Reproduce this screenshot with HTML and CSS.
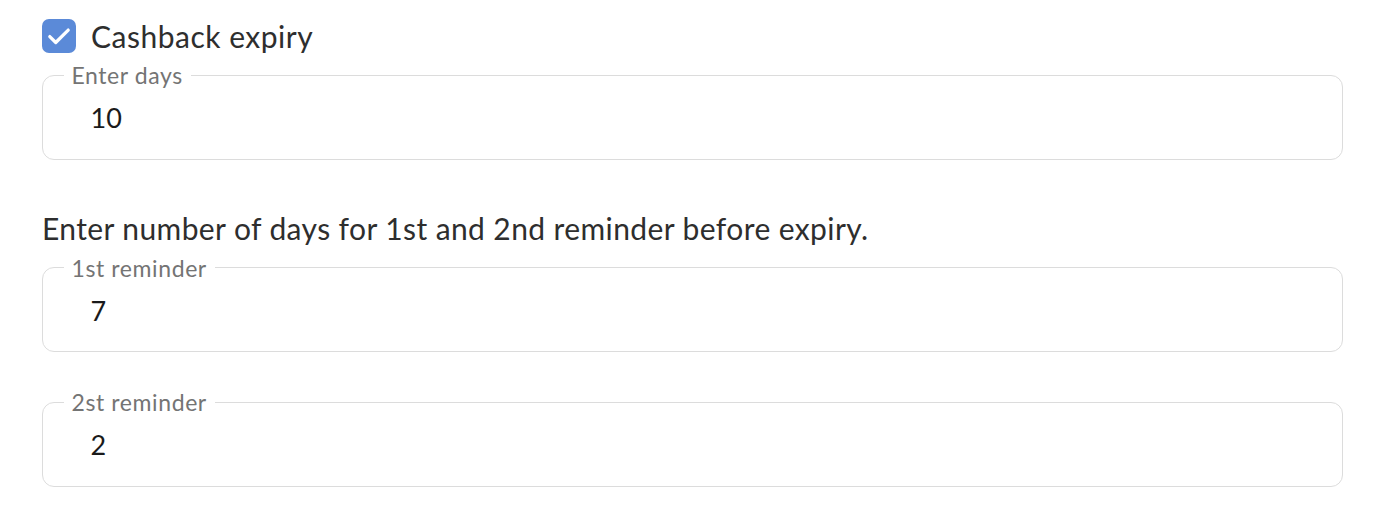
FILE: index.html
```html
<!DOCTYPE html>
<html>
<head>
<meta charset="utf-8">
<link rel="stylesheet" href="styles.css">
</head>
<body>
<div class="form">
  <label class="check-row">
    <span class="checkbox">
      <svg width="26" height="26" viewBox="0 0 24 24"><path d="M3.5 12.5l5.5 5.5L20.5 6.5" fill="none" stroke="#fff" stroke-width="3" stroke-linecap="round" stroke-linejoin="round"/></svg>
    </span>
    <span class="check-label">Cashback expiry</span>
  </label>
  <fieldset class="field field-first">
    <legend>Enter days</legend>
    <div class="value">10</div>
  </fieldset>
  <p class="hint">Enter number of days for 1st and 2nd reminder before expiry.</p>
  <fieldset class="field">
    <legend>1st reminder</legend>
    <div class="value">7</div>
  </fieldset>
  <fieldset class="field field-last">
    <legend>2st reminder</legend>
    <div class="value">2</div>
  </fieldset>
</div>
</body>
</html>
```

FILE: styles.css
```css
html, body {
  margin: 0;
  padding: 0;
  background: #fff;
}
body {
  font-family: Lato, "Noto Sans", sans-serif;
  color: #333;
}
.form {
  width: 1301px;
  padding: 19px 0 0 42px;
  display: flex;
  flex-direction: column;
}
.check-row {
  display: flex;
  align-items: center;
  gap: 15px;
  height: 34px;
}
.checkbox {
  width: 34px;
  height: 34px;
  border-radius: 7px;
  background: #5b8ad8;
  display: flex;
  align-items: center;
  justify-content: center;
}
.check-label {
  font-size: 30px;
  line-height: 36px;
  letter-spacing: 0.5px;
  color: #2e2e2e;
}
.field {
  margin: 0;
  padding: 0;
  border: 1.5px solid #dcdcdc;
  border-radius: 12px;
  min-width: 0;
}
.field-first {
  margin-top: 9px;
}
.field-last {
  margin-top: 37px;
}
.field legend {
  margin-left: 20.5px;
  padding: 0 8px;
  font-size: 23px;
  line-height: 26px;
  letter-spacing: 0.6px;
  color: #747474;
}
.value {
  padding: 14px 0 24.5px 47.5px;
  font-size: 27px;
  line-height: 32px;
  color: #1a1a1a;
}
.hint {
  margin: 50px 0 9px;
  font-size: 30px;
  line-height: 36px;
  letter-spacing: 0.4px;
  color: #2e2e2e;
}
```
